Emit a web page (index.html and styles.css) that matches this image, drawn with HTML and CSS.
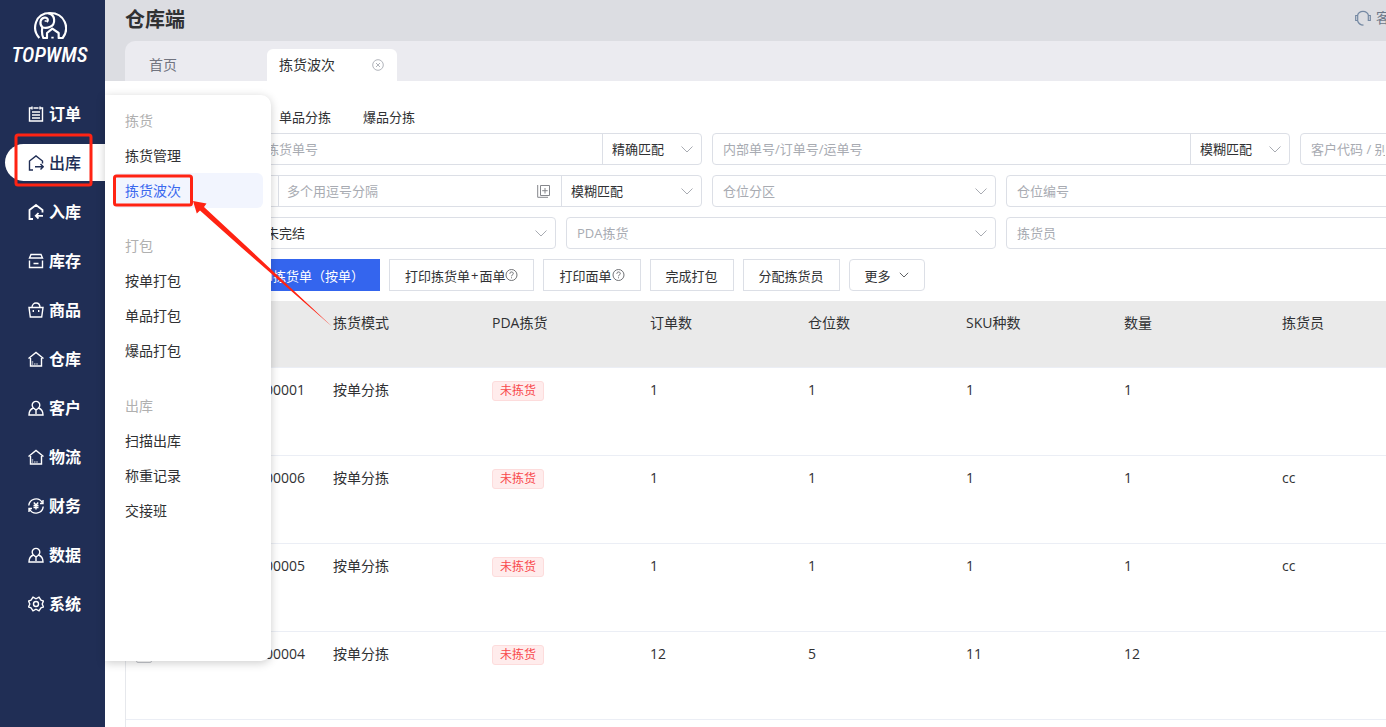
FILE: index.html
```html
<!DOCTYPE html>
<html lang="zh-CN">
<head>
<meta charset="utf-8">
<meta name="viewport" content="width=device-width, initial-scale=1">
<title>仓库端</title>
<link rel="stylesheet" href="styles.css">
</head>
<body>
<div class="app">
  <aside class="sidebar">
    <div class="brand">
      <svg class="brand-mark" viewBox="0 0 102 84" fill="none" stroke="#fff" stroke-width="6.5" stroke-linejoin="round">
        <path d="M19 81C-5 55 6 6 51 6s60 46 38 75H77V66L58 53 42 66v15H31C26 70 26 60 28 49"/>
        <path d="M46 7C67 10 70 40 50 48c-8 4-16 3-22 1C18 38 22 22 34 20c9-2 14 7 7 13"/>
        <path d="M35 30h5M55 80h7" stroke-width="5"/>
      </svg>
      <span class="brand-name">TOPWMS</span>
    </div>
    <nav class="nav">
      <a class="nav-item" href="#"><svg class="icon" viewBox="0 0 16 16"><path d="M3.500 2H1.500v13h13V2H12.500M5.500 2h5M4 .5v3M12 .5v3M4 6h8M4 9h8M4 12h8"/></svg>订单</a>
      <a class="nav-item active" href="#"><svg class="icon" viewBox="0 0 16 16"><path d="M5 15H1.500V6L8 1l6.500 5v2.500M7 11.800h8M12.500 9l2.700 2.800-2.700 2.700"/></svg>出库</a>
      <a class="nav-item" href="#"><svg class="icon bold" viewBox="0 0 16 16"><path d="M5 15H1.500V6L8 1l6.500 5v2.500M15 11.800H8M10.500 9l-2.700 2.800 2.700 2.700"/></svg>入库</a>
      <a class="nav-item" href="#"><svg class="icon" viewBox="0 0 16 16"><path d="M3 1.500h10l1.500 3.500h-13zM1.500 7.500v7h13v-7M5.500 10.500h5"/></svg>库存</a>
      <a class="nav-item" href="#"><svg class="icon" viewBox="0 0 16 16"><path d="M1 5.500h14l-1.300 9.500H2.300zM4 5.500C4-.5 12-.5 12 5.500M5.300 8v2M10.700 8v2"/></svg>商品</a>
      <a class="nav-item" href="#"><svg class="icon" viewBox="0 0 16 16"><path d="M.5 7.500 8 1.500l7.500 6M2.500 7v8h11V7M4.500 10.500v1M4.500 12.500v1M6.800 12.500v1M9 12.500v1"/></svg>仓库</a>
      <a class="nav-item" href="#"><svg class="icon" viewBox="0 0 16 16"><path d="M5.500 8a3.800 3.800 0 1 1 5 0c3 1 4.500 3 4.500 7H1c0-4 1.500-6 4.500-7L8 10l2.500-2M8 10v4"/></svg>客户</a>
      <a class="nav-item" href="#"><svg class="icon" viewBox="0 0 16 16"><path d="M.5 7.500 8 1.500l7.500 6M2.500 7v8h11V7M4.500 10.500v1M4.500 12.500v1M6.800 12.500v1M9 12.500v1"/></svg>物流</a>
      <a class="nav-item" href="#"><svg class="icon" viewBox="0 0 16 16"><path d="M.8 7.500a7.200 7.200 0 0 1 13.400-3M15.200 8.500a7.200 7.200 0 0 1-13.400 3M15 2v3.500h-3M1 14v-3.500h3M5.800 4.500 8 7l2.200-2.500M5.500 7.500h5M5.500 9.500h5M8 7v4.500"/></svg>财务</a>
      <a class="nav-item" href="#"><svg class="icon" viewBox="0 0 16 16"><path d="M5.500 8a3.800 3.800 0 1 1 5 0c3 1 4.500 3 4.500 7H1c0-4 1.500-6 4.500-7L8 10l2.500-2M8 10v4"/></svg>数据</a>
      <a class="nav-item" href="#"><svg class="icon" viewBox="0 0 16 16"><path d="M5 1.200 8 2.800l3-1.600 2 3 2.500.8L14.200 8l1.300 3-2.500.8-2 3-3-1.600-3 1.600-2-3L.5 11 1.800 8 .5 5 3 4.200z"/><circle cx="8" cy="8" r="2.500"/></svg>系统</a>
    </nav>
    <div class="flyout">
      <section class="group">
        <h2 class="group-title">拣货</h2>
        <a class="group-link" href="#">拣货管理</a>
        <a class="group-link current" href="#">拣货波次</a>
      </section>
      <section class="group">
        <h2 class="group-title">打包</h2>
        <a class="group-link" href="#">按单打包</a>
        <a class="group-link" href="#">单品打包</a>
        <a class="group-link" href="#">爆品打包</a>
      </section>
      <section class="group">
        <h2 class="group-title">出库</h2>
        <a class="group-link" href="#">扫描出库</a>
        <a class="group-link" href="#">称重记录</a>
        <a class="group-link" href="#">交接班</a>
      </section>
    </div>
  </aside>

  <main class="main">
    <header class="topbar">
      <h1 class="title">仓库端</h1>
      <a class="support" href="#"><svg class="support-icon" viewBox="0 0 16 16"><path d="M2.500 5.500a5.700 5.700 0 0 1 11 0M2.500 10.500c.8 2.800 3 4.500 6 4.700M.7 5.500h2v5h-2zM13.300 5.500h2v5h-2z"/></svg>客</a>
    </header>
    <div class="tabs">
      <a class="tab" href="#">首页</a>
      <div class="tab open">
        <a class="tab-link" href="#">拣货波次</a>
        <button class="tab-close" type="button" aria-label="关闭"><svg viewBox="0 0 12 12"><circle cx="6" cy="6" r="5.300"/><path d="m4 4 4 4M8 4 4 8"/></svg></button>
      </div>
    </div>

    <div class="content">
      <nav class="modes">
        <a class="mode" href="#">单品分拣</a>
        <a class="mode" href="#">爆品分拣</a>
      </nav>

      <form class="filters">
        <div class="row row-a">
          <div class="field">
            <input class="input indent" type="text" placeholder="拣货单号" aria-label="拣货单号">
            <select class="select match" aria-label="匹配方式"><option>精确匹配</option></select>
          </div>
          <div class="field">
            <input class="input" type="text" placeholder="内部单号/订单号/运单号" aria-label="内部单号/订单号/运单号">
            <select class="select match" aria-label="匹配方式"><option>模糊匹配</option></select>
          </div>
          <div class="field">
            <input class="input" type="text" placeholder="客户代码 / 别名" aria-label="客户代码 / 别名">
          </div>
        </div>
        <div class="row row-b">
          <div class="field">
            <span class="prefix"></span>
            <input class="input" type="text" placeholder="多个用逗号分隔" aria-label="多个用逗号分隔">
            <button class="batch" type="button" aria-label="批量输入"><svg viewBox="0 0 14 14"><path d="M3.500 1.500h9v10h-9zM.7 1v12.300H11M8 4v5.500M5.200 6.700h5.500"/></svg></button>
            <select class="select match-wide" aria-label="匹配方式"><option>模糊匹配</option></select>
          </div>
          <div class="field">
            <select class="select empty" aria-label="仓位分区"><option>仓位分区</option></select>
          </div>
          <div class="field">
            <input class="input" type="text" placeholder="仓位编号" aria-label="仓位编号">
          </div>
        </div>
        <div class="row row-c">
          <div class="field">
            <select class="select indent" aria-label="状态"><option>未完结</option></select>
          </div>
          <div class="field">
            <select class="select empty" aria-label="PDA拣货"><option>PDA拣货</option></select>
          </div>
          <div class="field">
            <input class="input" type="text" placeholder="拣货员" aria-label="拣货员">
          </div>
        </div>
      </form>

      <div class="actions">
        <button class="btn primary" type="button">打印拣货单（按单）</button>
        <button class="btn" type="button">打印拣货单<span class="plus">+</span>面单<svg class="help" viewBox="0 0 12 12"><circle cx="6" cy="6" r="5.500"/><path d="M4.300 4.800c0-2.500 3.500-2.400 3.500-.2C7.800 6 6 5.800 6 7.300M6 8.300v1"/></svg></button>
        <button class="btn" type="button">打印面单<svg class="help" viewBox="0 0 12 12"><circle cx="6" cy="6" r="5.500"/><path d="M4.300 4.800c0-2.500 3.500-2.400 3.500-.2C7.800 6 6 5.800 6 7.300M6 8.300v1"/></svg></button>
        <button class="btn" type="button">完成打包</button>
        <button class="btn" type="button">分配拣货员</button>
        <button class="btn more" type="button">更多<svg class="caret" viewBox="0 0 10 6"><path d="m.8.800 4.200 4.200L9.200.8"/></svg></button>
      </div>

      <div class="table-wrap">
        <table class="table">
          <colgroup><col class="col-check"><col class="col-code"><col class="col-mode"><col span="6" class="col-data"></colgroup>
          <thead>
            <tr><th></th><th></th><th>拣货模式</th><th>PDA拣货</th><th>订单数</th><th>仓位数</th><th>SKU种数</th><th>数量</th><th>拣货员</th></tr>
          </thead>
          <tbody>
            <tr><td><input class="check" type="checkbox" aria-label="选择 00001"></td><td class="code">00001</td><td>按单分拣</td><td><span class="tag">未拣货</span></td><td>1</td><td>1</td><td>1</td><td>1</td><td></td></tr>
            <tr><td><input class="check" type="checkbox" aria-label="选择 00006"></td><td class="code">00006</td><td>按单分拣</td><td><span class="tag">未拣货</span></td><td>1</td><td>1</td><td>1</td><td>1</td><td>cc</td></tr>
            <tr><td><input class="check" type="checkbox" aria-label="选择 00005"></td><td class="code">00005</td><td>按单分拣</td><td><span class="tag">未拣货</span></td><td>1</td><td>1</td><td>1</td><td>1</td><td>cc</td></tr>
            <tr><td><input class="check" type="checkbox" aria-label="选择 00004"></td><td class="code">00004</td><td>按单分拣</td><td><span class="tag">未拣货</span></td><td>12</td><td>5</td><td>11</td><td>12</td><td></td></tr>
          </tbody>
        </table>
      </div>
    </div>
  </main>

  <svg class="marks" width="340" height="340" viewBox="0 0 340 340">
    <g fill="none" stroke="#ff2313" stroke-width="3">
      <rect x="16" y="135" width="75" height="50" rx="2"/>
      <rect x="114.500" y="176" width="77" height="29" rx="2"/>
    </g>
    <path fill="#ff2313" d="M193 201l13.500 2.500-2.500 3.500 41 38 87.500 82-90.500-79-42-37.500-3.200 3z"/>
  </svg>
</div>
</body>
</html>
```
FILE: styles.css
```css
* {
  box-sizing: border-box;
}

body {
  margin: 0;
  font-family: "Open Sans", "Noto Sans CJK SC", sans-serif;
  font-size: 14px;
  line-height: 20px;
  color: #303133;
  background: #fff;
}

a {
  color: inherit;
  text-decoration: none;
}

button,
input,
select {
  margin: 0;
  font-family: inherit;
  font-size: 13px;
  color: inherit;
}

button {
  cursor: pointer;
}

.app {
  position: relative;
  display: flex;
  height: 100vh;
  overflow: hidden;
}

/* Sidebar */
.sidebar {
  position: relative;
  z-index: 1;
  flex: 0 0 105px;
  background: #202e55;
  color: #fff;
}

.brand {
  display: flex;
  flex-direction: column;
  align-items: center;
  height: 95px;
  padding: 11px 6px 0 0;
}

.brand-mark {
  width: 34px;
  height: 28px;
}

.brand-name {
  margin-top: 4px;
  font: italic 500 21px/24px "Liberation Sans Narrow", "Roboto Condensed", "Roboto", sans-serif;
}

.nav {
  display: flex;
  flex-direction: column;
  gap: 12px;
}

.nav-item {
  display: flex;
  align-items: center;
  gap: 5px;
  height: 37px;
  margin-left: 5px;
  padding-left: 23px;
  font-size: 16px;
  font-weight: 700;
}

.nav-item.active {
  border-radius: 19px 0 0 19px;
  background: #fff;
  color: #202e55;
  font-weight: 500;
}

.icon {
  width: 16px;
  height: 16px;
  fill: none;
  stroke: currentColor;
  stroke-width: 1.4;
}

.icon.bold {
  stroke-width: 1.8;
}

.flyout {
  position: absolute;
  top: 95px;
  left: 105px;
  width: 166px;
  height: calc(100vh - 161px);
  padding: 8px;
  border-radius: 0 10px 10px 0;
  background: #fff;
  box-shadow: 0 2px 10px rgba(0, 0, 0, 0.2);
  color: #303133;
}

.group {
  margin-bottom: 20px;
}

.group-title,
.group-link {
  display: block;
  margin: 0;
  padding-left: 12px;
  font-size: 14px;
  font-weight: 400;
  line-height: 35px;
}

.group-title {
  color: #b0b0b0;
}

.group-link.current {
  border-radius: 6px;
  background: #f2f5fe;
  color: #3a68ee;
}

/* Top area */
.main {
  display: flex;
  flex: 1;
  flex-direction: column;
  min-width: 0;
  overflow: hidden;
}

.topbar {
  display: flex;
  flex: none;
  justify-content: space-between;
  height: 41px;
  padding-left: 20px;
  background: #dcdde2;
}

.title {
  margin: 0;
  font-size: 20px;
  font-weight: 700;
  line-height: 40px;
}

.support {
  display: flex;
  align-items: center;
  gap: 5px;
  height: 36px;
  margin-right: -4px;
  color: #6b7688;
}

.support-icon {
  width: 16px;
  height: 16px;
  fill: none;
  stroke: #7589a3;
  stroke-width: 1.2;
}

.tabs {
  display: flex;
  flex: none;
  align-items: flex-end;
  height: 40px;
  padding-left: 20px;
  background: linear-gradient(#dcdde2, #dcdde2) left / 40px 100% no-repeat #ebebf0;
}

.tab {
  display: flex;
  align-items: center;
  justify-content: space-between;
  padding: 0 12px;
  height: 32px;
  color: #71747f;
}

.tab:first-child {
  flex: 0 0 142px;
  height: 40px;
  padding: 8px 24px 0;
  border-radius: 10px 0 0 0;
  background: #ebebf0;
}

.tab.open {
  flex: 0 0 130px;
  border-radius: 6px 6px 0 0;
  background: #fff;
  color: #303133;
}

.tab-close {
  display: flex;
  padding: 0;
  border: 0;
  background: none;
}

.tab-close svg {
  width: 14px;
  height: 12px;
  fill: none;
  stroke: #b1b4bb;
}

/* Content */
.content {
  padding-left: 20px;
}

.modes {
  display: flex;
  gap: 32px;
  padding: 26px 0 6px 154px;
  font-size: 13px;
}

.filters {
  display: grid;
  gap: 10px;
  margin-right: -10px;
}

.row {
  display: grid;
  gap: 10px;
}

.row-a {
  grid-template-columns: 577fr 578fr 96fr;
}

.row-b {
  grid-template-columns: 577fr 284fr 390fr;
}

.row-c {
  grid-template-columns: 431fr 430fr 390fr;
}

.field {
  display: flex;
  min-width: 0;
  height: 32px;
  border: 1px solid #dcdfe6;
  border-radius: 4px;
  background: #fff;
}

.input {
  flex: 1;
  min-width: 0;
  padding: 0 10px;
  border: 0;
  outline: 0;
  background: none;
}

.input::placeholder {
  color: #a8abb2;
  opacity: 1;
}

.prefix {
  flex: 0 0 152px;
}

.prefix + .input {
  padding-left: 8px;
  border-left: 1px solid #dcdfe6;
}

.select {
  flex: 1;
  min-width: 0;
  padding: 0 28px 0 10px;
  border: 0;
  outline: 0;
  appearance: none;
  background: url("data:image/svg+xml,%3Csvg xmlns='http://www.w3.org/2000/svg' width='12' height='7' fill='none' stroke='%23a8abb2'%3E%3Cpath d='M.5.5 6 6 11.5.5'/%3E%3C/svg%3E") right 8px center no-repeat;
}

.select.empty {
  color: #a8abb2;
}

.select.match,
.select.match-wide {
  flex: 0 0 99px;
  padding-left: 9px;
  border-left: 1px solid #dcdfe6;
}

.select.match-wide {
  flex-basis: 140px;
}

.indent {
  padding-left: 140px;
}

.batch {
  display: flex;
  align-items: center;
  padding: 0 10px;
  border: 0;
  background: none;
}

.batch svg {
  width: 14px;
  height: 14px;
  fill: none;
  stroke: #85878c;
}

.actions {
  display: flex;
  gap: 9px;
  padding: 10px 0 10px 106px;
}

.btn {
  display: flex;
  align-items: center;
  height: 32px;
  padding: 0 15px;
  border: 1px solid #dcdfe6;
  background: #fff;
  white-space: nowrap;
}

.btn.primary {
  border-color: #3465ee;
  background: #3465ee;
  color: #fff;
}

.btn.more {
  border-radius: 4px;
}

.plus {
  padding: 0 1px;
}

.help {
  width: 13px;
  height: 12px;
  fill: none;
  stroke: #606266;
  stroke-width: 0.9;
}

.caret {
  width: 10px;
  height: 6px;
  margin: 0 0 0 8px;
  fill: none;
  stroke: #606266;
}

.table-wrap {
  height: 600px;
  overflow: hidden;
  border-left: 1px solid #e6e8ec;
}

.table {
  width: 1304px;
  border-collapse: collapse;
  table-layout: fixed;
}

.col-check {
  width: 39px;
}

.col-mode {
  width: 159px;
}

.col-code,
.col-data {
  width: 158px;
}

.table th,
.table td {
  padding: 12px 10px 0;
  border-bottom: 1px solid #ebeef5;
  font-weight: 400;
  text-align: left;
  vertical-align: top;
}

.table th {
  height: 66px;
  background: #eaeaea;
}

.table td {
  height: 88px;
}

.table .code {
  padding-right: 18px;
  text-align: right;
}

.check {
  display: block;
  width: 16px;
  height: 16px;
  margin: 3px 0 0;
  border: 1px solid #c4c6cc;
  border-radius: 2px;
  appearance: none;
}

.check:checked {
  background: #3465ee;
}

.tag {
  display: block;
  width: fit-content;
  margin-top: 1px;
  padding: 0 7px;
  border: 1px solid #fddcdc;
  border-radius: 3px;
  background: #ffecec;
  color: #f8494c;
  font-size: 12px;
  line-height: 18px;
}

/* Highlight boxes and arrow drawn over the page */
.marks {
  position: absolute;
  top: 0;
  left: 0;
  z-index: 2;
  pointer-events: none;
}
```
